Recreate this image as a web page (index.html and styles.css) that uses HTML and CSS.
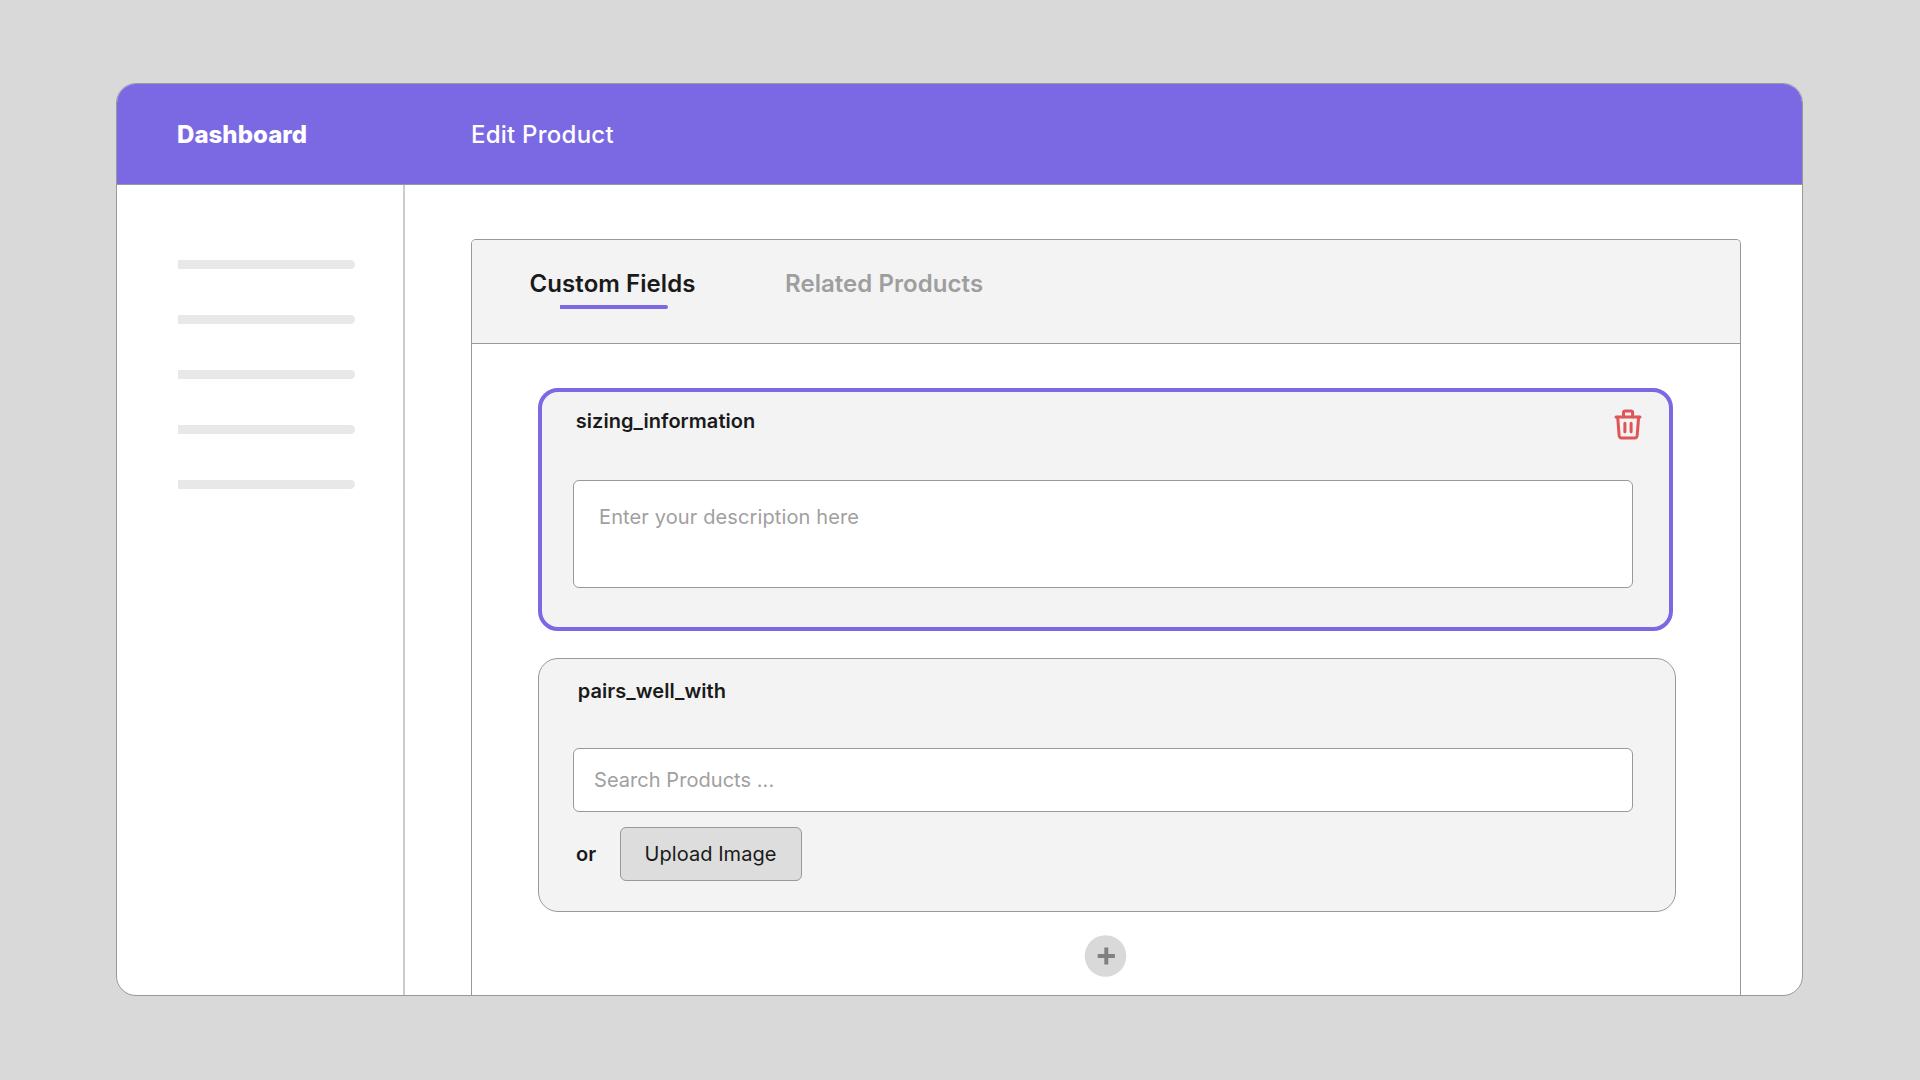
FILE: index.html
```html
<!DOCTYPE html>
<html lang="en">
<head>
<meta charset="utf-8">
<title>Edit Product</title>
<link rel="stylesheet" href="styles.css">
</head>
<body>
<div class="window">
  <header class="topbar">
    <div class="brand">Dashboard</div>
    <h1 class="page-title">Edit Product</h1>
  </header>
  <div class="body">
    <nav class="sidebar">
      <span class="nav-line"></span>
      <span class="nav-line"></span>
      <span class="nav-line"></span>
      <span class="nav-line"></span>
      <span class="nav-line"></span>
    </nav>
    <main class="content">
      <section class="panel">
        <div class="tabs">
          <div class="tab tab-active">Custom Fields</div>
          <div class="tab">Related Products</div>
        </div>
        <div class="fields">
          <article class="card card-selected">
            <div class="card-head">
              <h2 class="card-title">sizing_information</h2>
              <svg class="trash" viewBox="0 0 32 32" fill="none" stroke="#e05555" stroke-width="3" stroke-linecap="round" stroke-linejoin="round">
                <path d="M4 9.1H28"/>
                <path d="M11.5 8.8V4.8Q11.5 3 13.3 3H18.8Q20.6 3 20.6 4.8V8.8"/>
                <path d="M5.7 9.3L7.1 27.2Q7.4 30.1 9.6 30.1H22.7Q24.9 30.1 25.2 27.2L26.6 9.3"/>
                <path d="M12.9 15.3V23.8M19.1 15.3V23.8"/>
              </svg>
            </div>
            <div class="input textarea">Enter your description here</div>
          </article>
          <article class="card card-plain">
            <div class="card-head">
              <h2 class="card-title">pairs_well_with</h2>
            </div>
            <div class="input search">Search Products ...</div>
            <div class="upload-row">
              <span class="or">or</span>
              <div class="button">Upload Image</div>
            </div>
          </article>
          <div class="add">
            <svg viewBox="0 0 42 42" width="42" height="42">
              <circle cx="20.5" cy="21" r="20.8" fill="#d9d9d9"/>
              <path d="M12.7 21H29.9M21.3 12.4V29.6" stroke="#808080" stroke-width="4"/>
            </svg>
          </div>
        </div>
      </section>
    </main>
  </div>
</div>
</body>
</html>
```
FILE: styles.css
```css
* { box-sizing: border-box; }

body {
  margin: 0;
  width: 1920px;
  height: 1080px;
  padding: 83px 0 0 116px;
  overflow: hidden;
  background: #d9d9d9;
  color: #1a1a1a;
  font-family: Inter, sans-serif;
  font-size: 20px;
  line-height: 24px;
}

h1, h2 { margin: 0; }

.window {
  display: flex;
  flex-direction: column;
  width: 1687px;
  height: 913px;
  border: 1px solid #999;
  border-radius: 20px;
  overflow: hidden;
  background: #fff;
}

.topbar {
  display: flex;
  align-items: center;
  flex: none;
  height: 101px;
  padding: 2px 0 0 60px;
  border-bottom: 1px solid #999;
  background: #7b68e3;
  color: #fff;
  font-size: 24px;
}

.brand {
  width: 294px;
  font-weight: 800;
  letter-spacing: 0.05px;
}

.page-title {
  font-size: 24px;
  font-weight: 500;
  letter-spacing: 0.24px;
}

.body {
  display: flex;
  flex: 1;
  min-height: 0;
}

.sidebar {
  display: flex;
  flex-direction: column;
  gap: 46px;
  width: 288px;
  padding: 75px 0 0 60.6px;
  border-right: 2px solid #ccc;
}

.nav-line {
  width: 177px;
  height: 9px;
  border-radius: 0 4.5px 4.5px 0;
  background: #e8e8e8;
}

.content {
  display: flex;
  flex: 1;
  padding: 54px 0 0 66px;
}

.panel {
  width: 1270px;
  border: 1px solid #999;
  border-bottom: 0;
  border-radius: 5px 5px 0 0;
}

.tabs {
  display: flex;
  gap: 89.5px;
  height: 104px;
  padding: 31px 0 0 57.6px;
  border-bottom: 1px solid #999;
  border-radius: 4px 4px 0 0;
  background: #f3f3f3;
  font-size: 24px;
  font-weight: 600;
  letter-spacing: 0.06px;
}

.tab {
  color: #9e9e9e;
  line-height: 26px;
}

.tab-active { color: #1a1a1a; }

.tab-active::after {
  content: "";
  display: block;
  width: 108px;
  height: 4px;
  margin: 8px 0 0 30.4px;
  border-radius: 0 2px 2px 0;
  background: #7b68e3;
}

.fields {
  display: flex;
  flex-direction: column;
  padding: 44px 0 0 66px;
}

.card {
  border-radius: 20px;
  background: #f3f3f3;
}

.card-selected {
  width: 1135px;
  height: 243px;
  padding: 16px 25px 0 31px;
  border: 4px solid #7b68e3;
}

.card-plain {
  width: 1138px;
  height: 254px;
  margin-top: 27px;
  padding: 19px 0 0 34px;
  border: 1px solid #999;
}

.card-head {
  display: flex;
  justify-content: space-between;
  height: 72px;
  padding-left: 2.8px;
}

.card-plain .card-head {
  height: 70px;
  padding-left: 4.8px;
}

.card-title {
  font-size: 20px;
  font-weight: 600;
  line-height: 26px;
  letter-spacing: 0.05px;
}

.trash {
  width: 32px;
  height: 32px;
}

.input {
  width: 1060px;
  border: 1px solid #999;
  border-radius: 6px;
  background: #fff;
  color: #a0a0a0;
}

.textarea {
  height: 108px;
  padding: 24px 0 0 25px;
  letter-spacing: 0.12px;
}

.search {
  height: 64px;
  padding: 19px 0 0 20px;
  letter-spacing: 0.05px;
}

.upload-row {
  display: flex;
  align-items: center;
  margin-top: 15px;
}

.or {
  width: 47px;
  padding-left: 3px;
  font-weight: 600;
}

.button {
  width: 182px;
  height: 54px;
  padding: 14px 0 0 23.5px;
  border: 1px solid #999;
  border-radius: 6px;
  background: #ddd;
  line-height: 24px;
  letter-spacing: 0.06px;
}

.add {
  height: 42px;
  margin: 23px 0 0 547px;
}

.add svg {
  display: block;
  overflow: visible;
}
```
